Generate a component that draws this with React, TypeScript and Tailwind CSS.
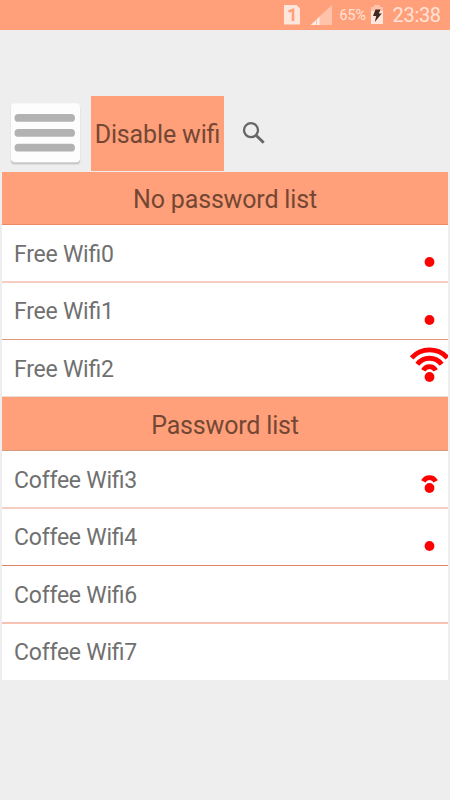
import { clsx } from "clsx";

interface Network {
  name: string;
  // number of arcs above the dot, null when the signal is out of view
  signal: number | null;
  rowClass: string;
  nameClass: string;
}

const openNetworks: Network[] = [
  { name: "Free Wifi0", signal: 0, rowClass: "h-[58px] border-b-2 border-[#f6cdc3]", nameClass: "pt-[5px]" },
  { name: "Free Wifi1", signal: 0, rowClass: "h-[57px] border-b border-[#e0967a]", nameClass: "pt-[3px]" },
  { name: "Free Wifi2", signal: 3, rowClass: "h-[57px] border-b border-[#eadbd6]", nameClass: "pt-[5px]" },
];

const lockedNetworks: Network[] = [
  { name: "Coffee Wifi3", signal: 1, rowClass: "h-[58px] border-b-2 border-[#f6cdc3]", nameClass: "pt-[5px]" },
  { name: "Coffee Wifi4", signal: 0, rowClass: "h-[57px] border-b border-[#e0836a]", nameClass: "pt-[3px]" },
  { name: "Coffee Wifi6", signal: null, rowClass: "h-[58px] border-b-2 border-[#f6c3b5]", nameClass: "pt-[4px]" },
  { name: "Coffee Wifi7", signal: null, rowClass: "h-[56px]", nameClass: "pt-[3px]" },
];

const ARCS = [
  "M23.3 24.4a6.9 6.9 0 0 1 12.4 0",
  "M17.3 18.3a15.3 15.3 0 0 1 24.4 0",
  "M11.6 11.8a24.2 24.2 0 0 1 35.8 0",
];

function SignalIcon({ level }: { level: number }) {
  return (
    <svg className="h-[56px] w-10 shrink-0" viewBox="8 -6 40 56" fill="none">
      <circle cx="29.5" cy="31" r="4.9" fill="#ff0000" />
      {ARCS.slice(0, level).map((d) => (
        <path key={d} d={d} stroke="#ff0000" strokeWidth="4.8" />
      ))}
    </svg>
  );
}

function StatusBar() {
  return (
    <div className="flex h-[30px] items-center bg-[#ffa07a] pl-[284px] text-[#ffe3d8]">
      <svg className="h-5 w-4 shrink-0" viewBox="0 0 16 20">
        <path d="M0 0h12.5L16 3.5V19.5H0z" fill="#ffe6dc" />
        <path d="M4.5 6.6L9 4.8V16" fill="none" stroke="#ffa07a" strokeWidth="2.6" />
      </svg>
      <svg className="ml-[10px] h-5 w-[22px] shrink-0" viewBox="0 0 22 20">
        <path d="M0 20L22 0v20z" fill="#ffc2aa" />
        <path d="M1 20l5-4.5V20zM7 20v-5.5l2.5-2.7V20z" fill="#ffeee7" />
      </svg>
      <span className="ml-[7.5px] w-[28px] whitespace-nowrap pt-px text-[14.2px] leading-none">65%</span>
      <svg className="ml-[2.5px] h-5 w-[14px] shrink-0" viewBox="0 0 14 20">
        <path d="M4 0h6v2h3v6H1V2h3z" fill="#ffc2aa" />
        <path d="M1 6h12v13H1z" fill="#ffe6dc" />
        <path d="M5.5 4.5h5L8.8 8.5h3L4.8 17l1.4-6H3z" fill="#42291f" />
      </svg>
      <span className="ml-[8.5px] text-[20px] leading-none tracking-[-0.3px]">23:38</span>
    </div>
  );
}

function Toolbar() {
  return (
    <div className="flex h-[75px] pl-[10px]">
      <svg className="mt-[6px] h-[64px] w-[71px]" viewBox="0 0 71 64">
        <rect x="0.5" y="3" width="70" height="60" rx="4" fill="#dedede" />
        <rect x="1" y="3" width="69" height="59" rx="4" fill="#c7c7c7" />
        <rect x="1" y="1.3" width="69" height="59" rx="4" fill="#fdfdfd" />
        {[12, 27, 41.8].map((y) => (
          <rect key={y} x="4.5" y={y} width="60.5" height="7.8" rx="3.9" fill="#b2b2b2" />
        ))}
      </svg>
      <button className="ml-[10px] w-[133px] whitespace-nowrap bg-[#ffa07a] pt-[3px] text-[25px] tracking-[-0.15px] text-[#744734]">
        Disable wifi
      </button>
      <svg className="ml-[17px] mt-[24px] h-[26px] w-[26px]" viewBox="0 0 26 26" fill="none" stroke="#666666">
        <circle cx="10" cy="10.2" r="7" strokeWidth="2.3" />
        <path d="M15 15.2l7.7 7.6" strokeWidth="2.9" />
      </svg>
    </div>
  );
}

function SectionTitle({ title, className }: { title: string; className: string }) {
  return (
    <h2
      className={clsx(
        "flex items-center justify-center border-b bg-[#ffa07a] text-[25px] tracking-[-0.17px] text-[#744734]",
        className,
      )}
    >
      {title}
    </h2>
  );
}

function NetworkList({ networks }: { networks: Network[] }) {
  return (
    <ul>
      {networks.map((network) => (
        <li
          key={network.name}
          className={clsx("flex items-center justify-between bg-white pl-3", network.rowClass)}
        >
          <span className={clsx("text-[23px] tracking-[-0.23px] text-[#707070]", network.nameClass)}>
            {network.name}
          </span>
          {network.signal !== null ? <SignalIcon level={network.signal} /> : null}
        </li>
      ))}
    </ul>
  );
}

export default function App() {
  return (
    <div className="h-[800px] w-[450px] overflow-hidden bg-[#eeeeee] font-[Roboto,sans-serif] [font-feature-settings:'liga']">
      <StatusBar />
      <div className="pt-[66px]">
        <Toolbar />
      </div>
      <main className="mt-px px-[2px]">
        <SectionTitle title="No password list" className="h-[53px] border-[#ee8a63] pt-[3px]" />
        <NetworkList networks={openNetworks} />
        <SectionTitle title="Password list" className="h-[54px] border-[#d99a80] pt-[4px]" />
        <NetworkList networks={lockedNetworks} />
      </main>
    </div>
  );
}
